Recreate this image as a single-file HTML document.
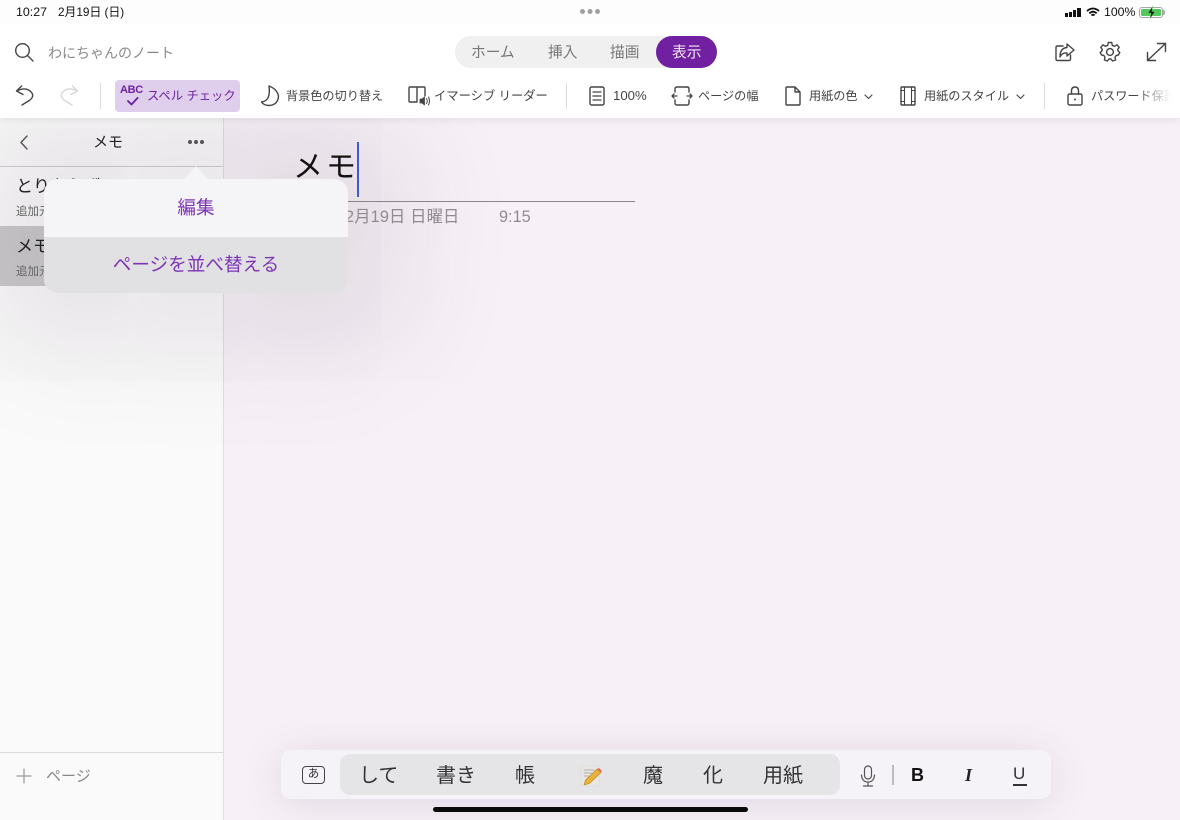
<!DOCTYPE html>
<html lang="ja"><head><meta charset="utf-8"><title>メモ</title>
<style>
*{box-sizing:border-box}
html,body{margin:0;padding:0;width:1180px;height:820px;overflow:hidden;background:#f7f1f7}
body{font-family:"Liberation Sans","Noto Sans CJK JP",sans-serif;position:relative;color:#333}
.a{position:absolute;white-space:nowrap}
svg{position:absolute;overflow:visible;fill:none;stroke:#444;stroke-width:1.4;stroke-linecap:round;stroke-linejoin:round}
.tb{font-size:12.15px;color:#444;line-height:16px;top:88px}
.sep{position:absolute;width:1px;background:#dcdcdc;top:83px;height:26px}
.cand{font-size:20px;color:#333;line-height:26px;top:763px}
</style></head><body>
<!-- page -->
<div class="a" style="left:223px;top:118px;width:957px;height:702px;background:#f7f1f7"></div>
<!-- sidebar -->
<div class="a" style="left:0;top:118px;width:224px;height:702px;background:#fafafa;border-right:1px solid #dfdfdf"></div>
<div class="a" style="left:0;top:118px;width:223px;height:49px;background:#f9f9f9;border-bottom:1px solid #cfcfcf"></div>
<div class="a" style="left:0;top:226px;width:223px;height:60px;background:#cacaca"></div>
<!-- popover shadow -->
<div class="a" style="left:44px;top:179px;width:304px;height:114px;border-radius:14px;box-shadow:0 0 110px 60px rgba(60,30,60,.10)"></div>
<svg style="left:18px;top:134px" width="12" height="18"><path d="M9 2 L3 8.5 L9 15" stroke="#555"/></svg>
<div class="a" style="left:93px;top:133px;font-size:15px;line-height:20px;color:#222">メモ</div>
<div class="a" style="left:188px;top:140px;width:4px;height:4px;border-radius:50%;background:#555;box-shadow:6px 0 #555,12px 0 #555"></div>
<div class="a" style="left:16px;top:176px;font-size:17px;line-height:22px;color:#222">とりあえず</div>
<div class="a" style="left:16px;top:204px;font-size:11.5px;line-height:16px;color:#666">追加元</div>
<div class="a" style="left:16px;top:236px;font-size:17px;line-height:22px;color:#222">メモ</div>
<div class="a" style="left:16px;top:264px;font-size:11.5px;line-height:16px;color:#666">追加元</div>
<div class="a" style="left:0;top:752px;width:223px;height:1px;background:#dcdcdc"></div>
<svg style="left:16px;top:768px" width="16" height="16"><path d="M1 8 H15 M8 1 V15" stroke="#999" stroke-width="1.2"/></svg>
<div class="a" style="left:46px;top:767px;font-size:15px;line-height:20px;color:#888">ページ</div>
<!-- note -->
<div class="a" style="left:293px;top:150px;font-size:30px;line-height:36px;color:#111;letter-spacing:3px">メモ</div>
<div class="a" style="left:357px;top:142px;width:2px;height:55px;background:#3f5bc8"></div>
<div class="a" style="left:296px;top:201px;width:339px;height:1px;background:#8a8589"></div>
<div class="a" style="left:345px;top:207px;font-size:16.3px;line-height:20px;color:#8f8b8f;letter-spacing:.15px">2月19日 日曜日</div>
<div class="a" style="left:499px;top:207px;font-size:16.3px;line-height:20px;color:#8f8b8f">9:15</div>
<!-- header -->
<div class="a" style="left:0;top:0;width:1180px;height:118px;background:#fff;box-shadow:0 2px 8px rgba(0,0,0,.08)"></div>
<div class="a" style="left:0;top:0;width:1180px;height:24px;background:#fdfdfd"></div>
<div class="a" style="left:16px;top:4px;font-size:12.4px;line-height:16px;color:#111">10:27</div>
<div class="a" style="left:58px;top:4px;font-size:11.8px;line-height:16px;color:#111">2月19日 (日)</div>
<div class="a" style="left:580px;top:9px;width:5px;height:5px;border-radius:50%;background:#a0a0a0;box-shadow:7.5px 0 #a0a0a0,15px 0 #a0a0a0"></div>
<!-- status right -->
<div class="a" style="left:1065px;top:13px;width:3px;height:3.5px;background:#111"></div>
<div class="a" style="left:1069px;top:11.5px;width:3px;height:5px;background:#111"></div>
<div class="a" style="left:1073px;top:9.5px;width:3px;height:7px;background:#111"></div>
<div class="a" style="left:1077px;top:7.5px;width:3.5px;height:9px;background:#111"></div>
<svg style="left:1086px;top:6.5px" width="14" height="11"><path d="M1 4 Q7 -1 13 4 M3.3 6.3 Q7 3 10.7 6.3 M5.4 8.4 Q7 7 8.6 8.4" stroke="#111" stroke-width="1.8" stroke-linecap="butt"/></svg>
<div class="a" style="left:1104px;top:4px;font-size:12.3px;line-height:16px;color:#111">100%</div>
<div class="a" style="left:1139px;top:7px;width:24px;height:11px;border:1px solid #a8a8a8;border-radius:3px;padding:1px"><div style="width:100%;height:100%;background:#52c95c;border-radius:1.5px"></div></div>
<div class="a" style="left:1163px;top:10px;width:2px;height:5px;background:#a8a8a8;border-radius:0 2px 2px 0"></div>
<svg style="left:1147px;top:6px" width="9" height="13"><path d="M5.5 0.5 L1 7 H4 L3 12.5 L8 5.5 H5 Z" fill="#111" stroke="#52c95c" stroke-width=".5"/></svg>
<!-- search -->
<svg style="left:14px;top:42px" width="20" height="20"><circle cx="8.5" cy="8.5" r="6.8" stroke="#444"/><path d="M13.5 13.5 L19 19" stroke="#444"/></svg>
<div class="a" style="left:48px;top:42.5px;font-size:14px;line-height:20px;color:#8a8a8a">わにちゃんのノート</div>
<!-- tabs -->
<div class="a" style="left:455px;top:36px;width:262px;height:32px;border-radius:16px;background:#f0f0f0"></div>
<div class="a" style="left:656px;top:36px;width:61px;height:32px;border-radius:16px;background:#7020a0"></div>
<div class="a" style="left:471px;top:43px;font-size:14.7px;line-height:20px;color:#777">ホーム</div>
<div class="a" style="left:548px;top:43px;font-size:14.7px;line-height:20px;color:#777">挿入</div>
<div class="a" style="left:610px;top:43px;font-size:14.7px;line-height:20px;color:#777">描画</div>
<div class="a" style="left:672px;top:43px;font-size:14.7px;line-height:20px;color:#f3e9f7">表示</div>
<!-- top right icons -->
<svg style="left:1054px;top:42px" width="22" height="20"><path d="M9 4 H3.5 Q2 4 2 5.5 V17 Q2 18.5 3.5 18.5 H15 Q16.5 18.5 16.5 17 V13" /><path d="M13 2 L20 8 L13 14 V11 Q8 10.5 6 15 Q6 6 13 5.5 Z"/></svg>
<svg style="left:1099px;top:41px" width="22" height="22"><circle cx="11" cy="11" r="3.4"/><path d="M9.3 1.5 H12.7 L13.3 4.3 L15.6 5.3 L18 3.8 L20.2 6.3 L18.6 8.6 L19.3 10.2 L20.8 11.5 L19.4 14 L17.2 14.4 L16 16.4 L16.6 19 L13.6 20 L12 18 H10 L8.4 20 L5.4 19 L6 16.4 L4.8 14.4 L2.6 14 L1.2 11.5 L2.7 10.2 L3.4 8.6 L1.8 6.3 L4 3.8 L6.4 5.3 L8.7 4.3 Z"/></svg>
<svg style="left:1146px;top:42px" width="21" height="20"><path d="M1.5 18.5 L19.5 1.5 M11.5 1.5 H19.5 V9.5 M1.5 10.5 V18.5 H9.5"/></svg>
<!-- toolbar -->
<svg style="left:14px;top:85px" width="22" height="22"><path d="M7.6 1 L2.5 6 L9 9.5 M2.5 6 Q13 1 18 8 Q20 12 16 15 L8 20"/></svg>
<svg style="left:60px;top:85px" width="20" height="22"><path d="M12.4 1 L17.5 6 L11 9.5 M17.5 6 Q7 1 2 8 Q0 12 4 15 L12 20" stroke="#d8d8d8"/></svg>
<div class="sep" style="left:100px"></div>
<div class="a" style="left:115px;top:80px;width:125px;height:32px;border-radius:4px;background:#e0cfec"></div>
<div class="a" style="left:120px;top:84px;font-size:11px;font-weight:700;line-height:12px;color:#6d22a0;letter-spacing:-.3px">ABC</div>
<svg style="left:127px;top:97px" width="12" height="9"><path d="M1 4 L4.5 7.5 L10.5 1" stroke="#6d22a0" stroke-width="1.9"/></svg>
<div class="a tb" style="left:147px;color:#6d22a0;font-size:12.3px">スペル チェック</div>
<svg style="left:260px;top:85px" width="20" height="22"><path d="M9 1 Q17 4 18.5 11 Q18 20 9 20.5 Q4 20.5 1.5 17 Q11 16 9 1 Z"/></svg>
<div class="a tb" style="left:286px">背景色の切り替え</div>
<svg style="left:408px;top:86px" width="22" height="20"><path d="M9 1 H2 Q1 1 1 2 V15 Q1 16 2 16 H9 M9 1 V16 M9 1 H16 Q17 1 17 2 V10"/><path d="M12 13 H14 L16.5 11 V19 L14 17 H12 Z" fill="#444" stroke-width=".8"/><path d="M18.5 12.5 Q20 15 18.5 17.5 M20.5 11 Q22.5 15 20.5 19" stroke-width="1"/></svg>
<div class="a tb" style="left:434px;font-size:12.3px">イマーシブ リーダー</div>
<div class="sep" style="left:566px"></div>
<svg style="left:589px;top:86px" width="16" height="20"><rect x="1" y="1" width="14" height="18" rx="1.5"/><path d="M4 6 H12 M4 10 H12 M4 14 H12" stroke-width="1.3"/></svg>
<div class="a tb" style="left:613px;font-size:13.2px">100%</div>
<svg style="left:671px;top:86px" width="22" height="20"><path d="M4 6 V3 Q4 1 6 1 H16 Q18 1 18 3 V6 M4 14 V17 Q4 19 6 19 H16 Q18 19 18 17 V14"/><path d="M1 10 H6 M3 8 L1 10 L3 12 M16 10 H21 M19 8 L21 10 L19 12" stroke-width="1.3"/></svg>
<div class="a tb" style="left:698px">ページの幅</div>
<svg style="left:785px;top:86px" width="16" height="20"><path d="M1 2 Q1 1 2 1 H10 L15 6 V18 Q15 19 14 19 H2 Q1 19 1 18 Z M10 1 V6 H15"/></svg>
<div class="a tb" style="left:809px">用紙の色</div>
<svg style="left:864px;top:94px" width="9" height="6"><path d="M1 1 L4.5 4.5 L8 1" stroke-width="1.1"/></svg>
<svg style="left:900px;top:86px" width="16" height="20"><rect x="1" y="1" width="14" height="18" rx="1"/><path d="M4.5 1 V19 M11.5 1 V19 M1 4.5 H4.5 M11.5 4.5 H15 M1 15.5 H4.5 M11.5 15.5 H15" stroke-width="1.1"/></svg>
<div class="a tb" style="left:924px">用紙のスタイル</div>
<svg style="left:1016px;top:94px" width="9" height="6"><path d="M1 1 L4.5 4.5 L8 1" stroke-width="1.1"/></svg>
<div class="sep" style="left:1044px"></div>
<svg style="left:1067px;top:86px" width="16" height="20"><rect x="1" y="8" width="14" height="11" rx="1.5"/><path d="M4.5 8 V5 Q4.5 1 8 1 Q11.5 1 11.5 5 V8"/><circle cx="8" cy="13.5" r="1" fill="#444" stroke="none"/></svg>
<div class="a tb" style="left:1091px">パスワード保護</div>
<div class="a" style="left:1135px;top:82px;width:45px;height:30px;background:linear-gradient(90deg,rgba(255,255,255,0),#fff 80%)"></div>
<!-- popover -->
<div class="a" style="left:184px;top:166px;width:0;height:0;border-left:12px solid transparent;border-right:12px solid transparent;border-bottom:13px solid #f5f4f6"></div>
<div class="a" style="left:44px;top:179px;width:304px;height:114px;border-radius:14px;overflow:hidden;background:#f5f4f6">
  <div class="a" style="left:0;top:0;width:304px;height:58px;text-align:center;line-height:57px;font-size:18.6px;color:#7d35b5">編集</div>
  <div class="a" style="left:0;top:58px;width:304px;height:56px;text-align:center;line-height:56px;font-size:18.6px;color:#7d35b5;background:#e1e0e2">ページを並べ替える</div>
</div>
<!-- keyboard bar -->
<div class="a" style="left:281px;top:750px;width:770px;height:49px;border-radius:10px;background:#f6f3f8;box-shadow:0 4px 40px rgba(70,40,70,.13)"></div>
<div class="a" style="left:340px;top:754px;width:500px;height:41px;border-radius:10px;background:#e5e5e8"></div>
<div class="a" style="left:302px;top:766px;width:23px;height:18px;border:1.4px solid #444;border-radius:4px;text-align:center;font-size:11.5px;line-height:15px;color:#333">あ</div>
<div class="a cand" style="left:359px">して</div>
<div class="a cand" style="left:436px">書き</div>
<div class="a cand" style="left:515px">帳</div>
<svg style="left:580px;top:765px" width="22" height="22"><rect x="1" y="1" width="18" height="20" fill="#e9e7e2" stroke="#d8d8d8" stroke-width=".6"/><path d="M4 5 H14 M4 8 H12 M4 11 H9" stroke="#999" stroke-width=".7"/><path d="M4 20 L5.5 15 L17 4 L21 7.5 L9.5 18.5 Z" fill="#e9b03c" stroke="#b98722" stroke-width=".6"/><path d="M17 4 L21 7.5 L22 6 L19 3Z" fill="#e06a6a" stroke="none"/></svg>
<div class="a cand" style="left:643px">魔</div>
<div class="a cand" style="left:703px">化</div>
<div class="a cand" style="left:763px">用紙</div>
<svg style="left:860px;top:765px" width="16" height="22"><rect x="4.5" y="1" width="7" height="13" rx="3.5" stroke="#555" stroke-width="1.2"/><path d="M1.5 10 Q2 17 8 17 Q14 17 14.5 10 M8 17 V21 M3.5 21 H12.5" stroke="#555" stroke-width="1.2"/></svg>
<div class="a" style="left:892px;top:765px;width:2px;height:20px;background:#bdbcbf"></div>
<div class="a" style="left:911px;top:764px;font-size:18px;font-weight:700;line-height:22px;color:#111">B</div>
<div class="a" style="left:965px;top:764px;font-size:18px;font-style:italic;font-weight:700;font-family:'Liberation Serif',serif;line-height:22px;color:#222">I</div>
<div class="a" style="left:1013px;top:763px;font-size:17px;line-height:21px;color:#333">U</div>
<div class="a" style="left:1013px;top:784px;width:14px;height:1.5px;background:#333"></div>
<!-- home indicator -->
<div class="a" style="left:433px;top:807px;width:315px;height:5px;border-radius:3px;background:#0a0a0a"></div>
</body></html>
